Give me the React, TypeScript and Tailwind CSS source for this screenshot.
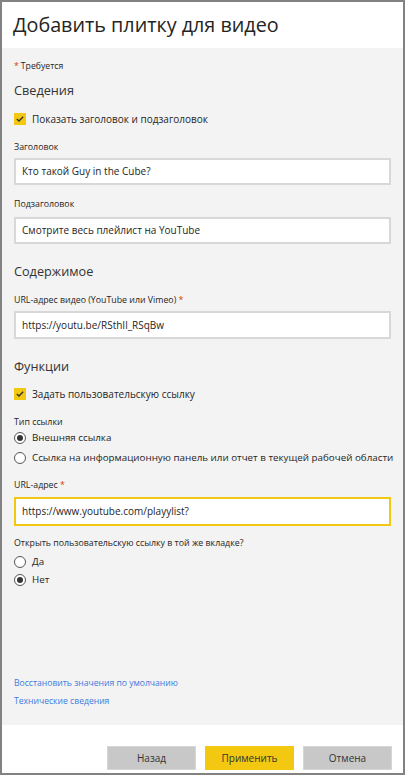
import React from 'react';

const FONT = { fontFamily: '"Open Sans", "Noto Sans", Arial, sans-serif' };

const Checkbox = ({ label }: { label: string }) => (
  <div className="flex items-center h-[16px] gap-[6px]">
    <span className="w-[12px] h-[12px] bg-[#f2c811] flex items-center justify-center">
      <svg width="8" height="6" viewBox="0 0 8 6" fill="none">
        <path d="M0.8 3 L3 5 L7.2 0.8" stroke="#333" strokeWidth="1.4" />
      </svg>
    </span>
    <span className="text-[10px] text-[#252525]">{label}</span>
  </div>
);

const Radio = ({ label, checked }: { label: string; checked?: boolean }) => (
  <div className="flex items-center h-[16px] gap-[6px]">
    <span className="w-[12px] h-[12px] rounded-full border border-[#555] bg-white flex items-center justify-center shrink-0">
      {checked && <span className="w-[6px] h-[6px] rounded-full bg-[#333]" />}
    </span>
    <span className="text-[9.8px] text-[#252525] whitespace-nowrap">{label}</span>
  </div>
);

const Label = ({ text, required, className }: { text: string; required?: boolean; className?: string }) => (
  <div className={`text-[8.8px] leading-[12px] h-[12px] text-[#252525] ${className ?? ''}`}>
    {text}
    {required && <span className="text-[#d83b01]"> *</span>}
  </div>
);

const Field = ({ value, className, focus }: { value: string; className?: string; focus?: boolean }) => (
  <div
    className={`bg-white border-2 ${focus ? 'border-[#f2c811]' : 'border-[#d8d8d8]'} flex items-center px-[6px] text-[10px] text-[#252525] ${className ?? ''}`}
  >
    {value}
  </div>
);

const Section = ({ title, className }: { title: string; className?: string }) => (
  <div className={`text-[12.7px] leading-[18px] h-[18px] text-[#333] ${className ?? ''}`}>{title}</div>
);

const Button = ({ text, primary }: { text: string; primary?: boolean }) => (
  <button
    className={`w-[89px] h-[24px] text-[10px] text-[#333] border ${primary ? 'bg-[#f2c811] border-[#f2c811]' : 'bg-[#c8c8c8] border-[#d6d6d6]'}`}
  >
    {text}
  </button>
);

export default function App() {
  return (
    <div style={FONT} className="w-[405px] h-[775px] border-2 border-[#828282] bg-white flex flex-col">
      <div className="h-[46px] shrink-0 flex items-center px-[11px] text-[19.75px] text-[#252423]">
        Добавить плитку для видео
      </div>

      <div className="flex-1 bg-[#f3f3f3] px-[12px] pt-[12px] pb-[18px] flex flex-col">
        <div className="text-[8.7px] leading-[12px] h-[12px] text-[#252525] flex items-center">
          <span className="text-[#d83b01] mr-[2px]">*</span>Требуется
        </div>

        <Section title="Сведения" className="mt-[9px]" />
        <div className="mt-[12px]">
          <Checkbox label="Показать заголовок и подзаголовок" />
        </div>

        <Label text="Заголовок" className="mt-[14px]" />
        <Field value="Кто такой Guy in the Cube?" className="mt-[5px] h-[27px]" />

        <Label text="Подзаголовок" className="mt-[13px]" />
        <Field value="Смотрите весь плейлист на YouTube" className="mt-[7px] h-[27px]" />

        <Section title="Содержимое" className="mt-[18px]" />
        <Label text="URL-адрес видео (YouTube или Vimeo)" required className="mt-[14px]" />
        <Field value="https://youtu.be/RSthIl_RSqBw" className="mt-[5px] h-[28px]" />

        <Section title="Функции" className="mt-[18px]" />
        <div className="mt-[11px]">
          <Checkbox label="Задать пользовательскую ссылку" />
        </div>

        <Label text="Тип ссылки" className="mt-[14px]" />
        <div className="mt-[2px]">
          <Radio label="Внешняя ссылка" checked />
        </div>
        <div className="mt-[4px]">
          <Radio label="Ссылка на информационную панель или отчет в текущей рабочей области" />
        </div>

        <Label text="URL-адрес" required className="mt-[13px]" />
        <Field value="https://www.youtube.com/playylist?" focus className="mt-[6px] h-[29px]" />

        <Label text="Открыть пользовательскую ссылку в той же вкладке?" className="mt-[11px]" />
        <div className="mt-[5px]">
          <Radio label="Да" />
        </div>
        <div className="mt-[2px]">
          <Radio label="Нет" checked />
        </div>

        <div className="mt-auto text-[8.6px] leading-[12px] text-[#3d7be0]">
          Восстановить значения по умолчанию
        </div>
        <div className="mt-[6px] text-[8.6px] leading-[12px] text-[#3d7be0]">Технические сведения</div>
      </div>

      <div className="h-[48px] shrink-0 flex justify-end items-start gap-[9px] pt-[21px] pr-[11px]">
        <Button text="Назад" />
        <Button text="Применить" primary />
        <Button text="Отмена" />
      </div>
    </div>
  );
}
